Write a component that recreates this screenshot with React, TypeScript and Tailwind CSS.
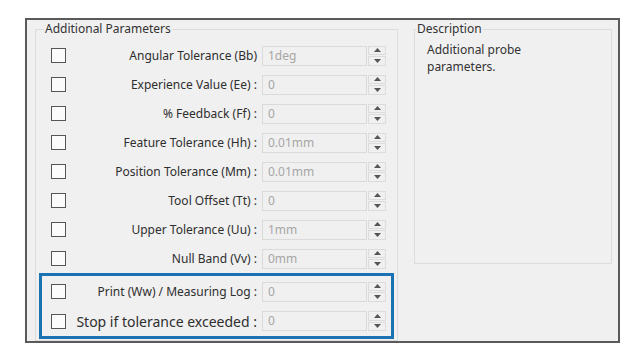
import React from 'react';

interface Param {
  label: string;
  value: string;
}

const params: Param[] = [
  { label: 'Angular Tolerance (Bb)', value: '1deg' },
  { label: 'Experience Value (Ee) :', value: '0' },
  { label: '% Feedback (Ff) :', value: '0' },
  { label: 'Feature Tolerance (Hh) :', value: '0.01mm' },
  { label: 'Position Tolerance (Mm) :', value: '0.01mm' },
  { label: 'Tool Offset (Tt) :', value: '0' },
  { label: 'Upper Tolerance (Uu) :', value: '1mm' },
  { label: 'Null Band (Vv) :', value: '0mm' },
];

function Spinner() {
  return (
    <div className="flex flex-col gap-[1px] w-[18px] h-[20px] ml-[1px]">
      <div className="flex-1 flex items-center justify-center border border-[#dcdcdc] bg-[#f0f0f0]">
        <svg width="7" height="4" viewBox="0 0 7 4">
          <polygon points="3.5,0 7,4 0,4" fill="#555" />
        </svg>
      </div>
      <div className="flex-1 flex items-center justify-center border border-[#dcdcdc] bg-[#f0f0f0]">
        <svg width="7" height="4" viewBox="0 0 7 4">
          <polygon points="0,0 7,0 3.5,4" fill="#555" />
        </svg>
      </div>
    </div>
  );
}

function Row({ label, value, big, pad, h }: { label: string; value: string; big?: boolean; pad: string; h: string }) {
  return (
    <div className={`flex items-center ${h} ${pad}`}>
      <div className="w-[15px] h-[15px] border border-[#555] bg-[#fbfbfb] shrink-0" />
      <div
        className={`flex-1 text-right pr-[5px] text-[#2e2e2e] whitespace-nowrap ${
          big ? 'text-[14px]' : 'text-[12px]'
        }`}
      >
        {label}
      </div>
      <div className="w-[105px] h-[20px] border border-[#dadada] bg-[#f0f0f0] pl-[5px] flex items-center text-[12px] text-[#a6a6a6]">
        {value}
      </div>
      <Spinner />
    </div>
  );
}

export default function App() {
  return (
    <div
      className="w-[640px] h-[360px] bg-white pt-[18px] pl-[25px]"
      style={{ fontFamily: '"Noto Sans", "Open Sans", sans-serif' }}
    >
      <div className="w-[595px] h-[325px] border-2 border-[#5a5a5a] bg-[#f0f0f0] flex items-start pl-[8px] pt-[9px]">
        {/* Additional Parameters group */}
        <div className="relative w-[363px] h-[312px] border border-[#dcdcdc] px-[3px] pt-[11px]">
          <span className="absolute -top-[10px] left-[8px] px-[1px] bg-[#f0f0f0] text-[12px] text-[#333]">
            Additional Parameters
          </span>
          {params.map((p) => (
            <Row key={p.label} label={p.label} value={p.value} pad="pl-[12px] pr-[8px]" h="h-[29px]" />
          ))}
          <div className="border-[3px] border-[#1a72b3] pt-[1px]">
            <Row label="Print (Ww) / Measuring Log :" value="0" pad="pl-[9px] pr-[5px]" h="h-[29px]" />
            <Row label="Stop if tolerance exceeded :" value="0" big pad="pl-[9px] pr-[5px]" h="h-[30px]" />
          </div>
        </div>

        {/* Description group */}
        <div className="relative ml-[16px] w-[198px] h-[235px] border border-[#dcdcdc] pl-[12px] pt-[11px]">
          <span className="absolute -top-[10px] left-[1px] px-[1px] bg-[#f0f0f0] text-[12px] text-[#333]">
            Description
          </span>
          <p className="text-[12px] leading-[17px] text-[#333]">
            Additional probe
            <br />
            parameters.
          </p>
        </div>
      </div>
    </div>
  );
}
